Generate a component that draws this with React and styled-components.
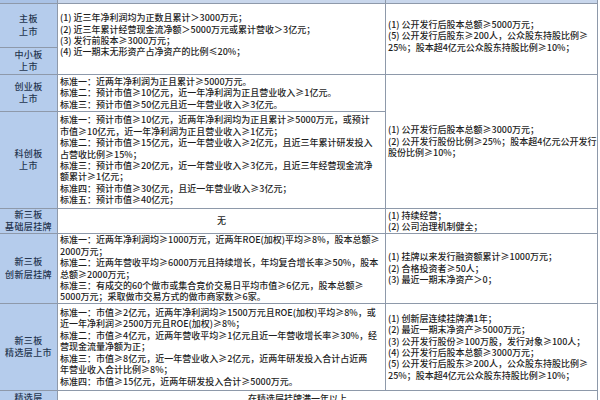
import React from "react";
import styled, { createGlobalStyle } from "styled-components";

const GlobalStyle = createGlobalStyle`
  html, body {
    margin: 0;
    padding: 0;
    background: #ffffff;
  }
  body {
    font-family: "Noto Sans CJK SC", "Liberation Sans", sans-serif;
    color: #1e1e1e;
    overflow: hidden;
  }
`;

const Table = styled.div`
  display: grid;
  grid-template-columns: 57px 327px 211px;
  grid-template-rows: 3px 43px 26px 36px 96px 24px 69px 86px 40px;
  gap: 1px;
  width: 597px;
  height: 400px;
  overflow: hidden;
  background: #8e99aa;
  border-right: 1px solid #8e99aa;
`;

const Cell = styled.div`
  grid-column: ${(p) => p.$col};
  grid-row: ${(p) => p.$row};
  background: #ffffff;
  display: flex;
  flex-direction: column;
  justify-content: ${(p) => (p.$top ? "flex-start" : "center")};
  align-items: ${(p) => (p.$center ? "center" : "flex-start")};
  padding: ${(p) => (p.$top ? "2px" : "0")} 2px ${(p) => p.$pb || 0}px
    ${(p) => p.$pl || 2}px;
  font-size: 9px;
  font-weight: 500;
  line-height: 11.4px;
  letter-spacing: ${(p) => p.$ls ?? 0}px;
  overflow: hidden;
`;

const HeadCell = styled.div`
  grid-row: 1;
  background: ${(p) => (p.$first ? "#a9c2e6" : "#c9d7ec")};
`;

const Label = styled.div`
  grid-column: 1;
  grid-row: ${(p) => p.$row};
  background: #b5ccec;
  display: flex;
  flex-direction: column;
  justify-content: ${(p) => (p.$top ? "flex-start" : "center")};
  align-items: center;
  padding-top: ${(p) => (p.$top ? "1px" : "0")};
  font-size: 9px;
  font-weight: 500;
  line-height: 12.5px;
  letter-spacing: 0.4px;
  color: #263650;
  overflow: hidden;
`;

const Line = styled.div`
  white-space: nowrap;
`;

const Lines = ({ items }) =>
  items.map((t, i) => <Line key={i}>{t}</Line>);

const rows = [
  { label: ["主板", "上市"], row: 2 },
  { label: ["中小板", "上市"], row: 3 },
  { label: ["创业板", "上市"], row: 4 },
  { label: ["科创板", "上市"], row: 5 },
  { label: ["新三板", "基础层挂牌"], row: 6 },
  { label: ["新三板", "创新层挂牌"], row: 7 },
  { label: ["新三板", "精选层上市"], row: 8 },
  { label: ["精选层", "转板上市"], row: 9, top: true },
];

const mainBoard = [
  "(1) 近三年净利润均为正数且累计＞3000万元；",
  "(2) 近三年累计经营现金流净额＞5000万元或累计营收＞3亿元；",
  "(3) 发行前股本≥3000万元；",
  "(4) 近一期末无形资产占净资产的比例≤20%；",
];

const mainRight = [
  "(1) 公开发行后股本总额≥5000万元；",
  "(5) 公开发行后股东≥200人，公众股东持股比例≥",
  "25%；股本超4亿元公众股东持股比例≥10%；",
];

const gem = [
  "标准一：近两年净利润为正且累计≥5000万元。",
  "标准二：预计市值≥10亿元，近一年净利润为正且营业收入≥1亿元。",
  "标准三：预计市值≥50亿元且近一年营业收入≥3亿元。",
];

const star = [
  "标准一：预计市值≥10亿元，近两年净利润均为正且累计≥5000万元，或预计",
  "市值≥10亿元，近一年净利润为正且营业收入≥1亿元；",
  "标准二：预计市值≥15亿元，近一年营业收入≥2亿元，且近三年累计研发投入",
  "占营收比例≥15%；",
  "标准三：预计市值≥20亿元，近一年营业收入≥3亿元，且近三年经营现金流净",
  "额累计≥1亿元；",
  "标准四：预计市值≥30亿元，且近一年营业收入≥3亿元；",
  "标准五：预计市值≥40亿元；",
];

const starRight = [
  "(1) 公开发行后股本总额≥3000万元；",
  "(2) 公开发行股份比例≥25%；股本超4亿元公开发行",
  "股份比例≥10%；",
];

const baseRight = ["(1) 持续经营；", "(2) 公司治理机制健全；"];

const innovation = [
  "标准一：近两年净利润均≥1000万元，近两年ROE(加权)平均≥8%，股本总额≥",
  "2000万元；",
  "标准二：近两年营收平均≥6000万元且持续增长，年均复合增长率≥50%，股本",
  "总额≥2000万元；",
  "标准三：有成交的60个做市或集合竞价交易日平均市值≥6亿元，股本总额≥",
  "5000万元；采取做市交易方式的做市商家数≥6家。",
];

const innovationRight = [
  "(1) 挂牌以来发行融资额累计≥1000万元；",
  "(2) 合格投资者≥50人；",
  "(3) 最近一期末净资产＞0；",
];

const select = [
  "标准一：市值≥2亿元，近两年净利润均≥1500万元且ROE(加权)平均≥8%，或",
  "近一年净利润≥2500万元且ROE(加权)≥8%；",
  "标准二：市值≥4亿元，近两年营收平均≥1亿元且近一年营收增长率≥30%，经",
  "营现金流量净额为正；",
  "标准三：市值≥8亿元，近一年营业收入≥2亿元，近两年研发投入合计占近两",
  "年营业收入合计比例≥8%；",
  "标准四：市值≥15亿元，近两年研发投入合计≥5000万元。",
];

const selectRight = [
  "(1) 创新层连续挂牌满1年；",
  "(2) 最近一期末净资产≥5000万元；",
  "(3) 公开发行股份≥100万股，发行对象≥100人；",
  "(4) 公开发行后股本总额≥3000万元；",
  "(5) 公开发行后股东≥200人，公众股东持股比例≥",
  "25%；股本超4亿元公众股东持股比例≥10%；",
];

export default function App() {
  return (
    <>
      <GlobalStyle />
      <Table>
        <HeadCell $first />
        <HeadCell />
        <HeadCell />

        {rows.map((r) => (
          <Label key={r.row} $row={r.row} $top={r.top}>
            <Lines items={r.label} />
          </Label>
        ))}

        <Cell $col={2} $row="2 / span 2" $pb={8}>
          <Lines items={mainBoard} />
        </Cell>
        <Cell $col={3} $row="2 / span 2" $pb={6}>
          <Lines items={mainRight} />
        </Cell>

        <Cell $col={2} $row={4}>
          <Lines items={gem} />
        </Cell>
        <Cell $col={3} $row="4 / span 2">
          <Lines items={starRight} />
        </Cell>

        <Cell $col={2} $row={5}>
          <Lines items={star} />
        </Cell>

        <Cell $col={2} $row={6} $center>
          <Line>无</Line>
        </Cell>
        <Cell $col={3} $row={6}>
          <Lines items={baseRight} />
        </Cell>

        <Cell $col={2} $row={7}>
          <Lines items={innovation} />
        </Cell>
        <Cell $col={3} $row={7}>
          <Lines items={innovationRight} />
        </Cell>

        <Cell $col={2} $row={8}>
          <Lines items={select} />
        </Cell>
        <Cell $col={3} $row={8}>
          <Lines items={selectRight} />
        </Cell>

        <Cell $col="2 / span 2" $row={9} $top $pl={190}>
          <Line>在精选层挂牌满一年以上</Line>
        </Cell>
      </Table>
    </>
  );
}
